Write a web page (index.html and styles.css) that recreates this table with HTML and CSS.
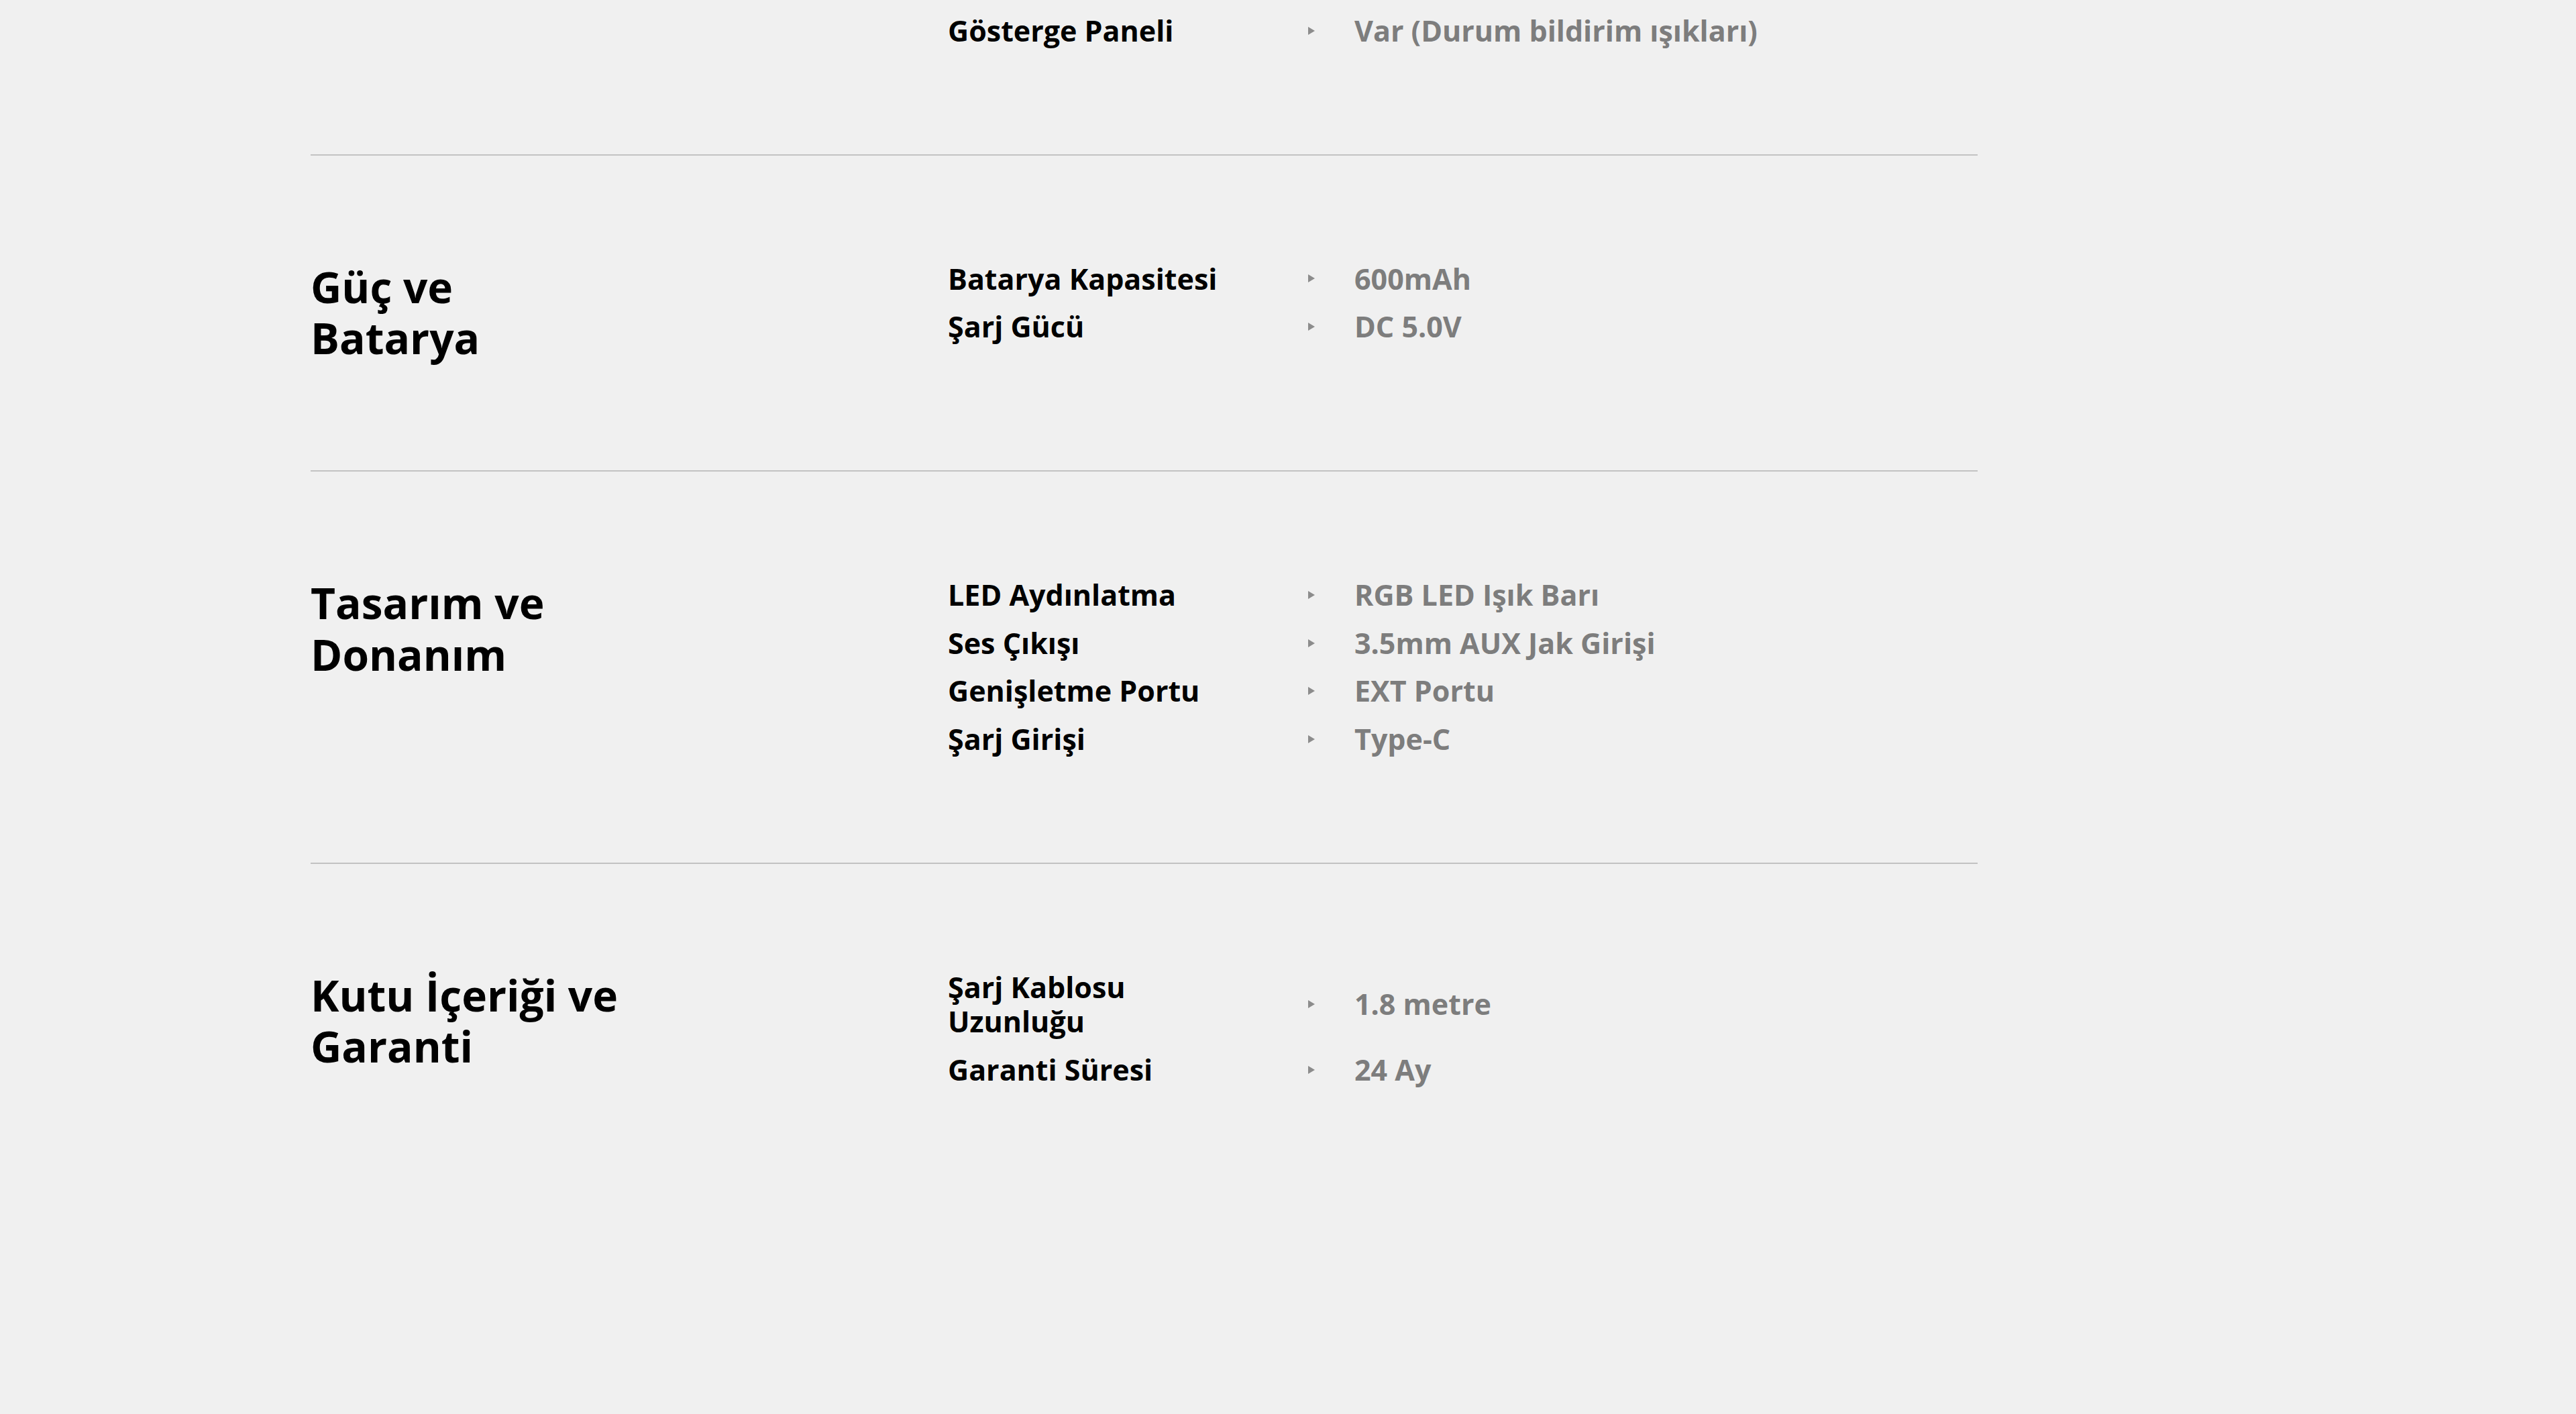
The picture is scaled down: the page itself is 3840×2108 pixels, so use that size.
FILE: index.html
```html
<!DOCTYPE html>
<html lang="tr">
<head>
<meta charset="utf-8">
<title>Teknik Özellikler</title>
<link rel="stylesheet" href="styles.css">
</head>
<body>
<main class="specs">
  <section class="spec-group spec-group--first">
    <h2 class="spec-title"></h2>
    <div class="spec-list">
      <div class="spec-row"><span class="spec-label">Gösterge Paneli</span><span class="spec-arrow"></span><span class="spec-value">Var (Durum bildirim ışıkları)</span></div>
    </div>
  </section>
  <section class="spec-group">
    <h2 class="spec-title">Güç ve<br>Batarya</h2>
    <div class="spec-list">
      <div class="spec-row"><span class="spec-label">Batarya Kapasitesi</span><span class="spec-arrow"></span><span class="spec-value">600mAh</span></div>
      <div class="spec-row"><span class="spec-label">Şarj Gücü</span><span class="spec-arrow"></span><span class="spec-value">DC 5.0V</span></div>
    </div>
  </section>
  <section class="spec-group">
    <h2 class="spec-title">Tasarım ve<br>Donanım</h2>
    <div class="spec-list">
      <div class="spec-row"><span class="spec-label">LED Aydınlatma</span><span class="spec-arrow"></span><span class="spec-value">RGB LED Işık Barı</span></div>
      <div class="spec-row"><span class="spec-label">Ses Çıkışı</span><span class="spec-arrow"></span><span class="spec-value">3.5mm AUX Jak Girişi</span></div>
      <div class="spec-row"><span class="spec-label">Genişletme Portu</span><span class="spec-arrow"></span><span class="spec-value">EXT Portu</span></div>
      <div class="spec-row"><span class="spec-label">Şarj Girişi</span><span class="spec-arrow"></span><span class="spec-value">Type-C</span></div>
    </div>
  </section>
  <section class="spec-group spec-group--last">
    <h2 class="spec-title">Kutu İçeriği ve<br>Garanti</h2>
    <div class="spec-list">
      <div class="spec-row"><span class="spec-label">Şarj Kablosu<br>Uzunluğu</span><span class="spec-arrow"></span><span class="spec-value">1.8 metre</span></div>
      <div class="spec-row"><span class="spec-label">Garanti Süresi</span><span class="spec-arrow"></span><span class="spec-value">24 Ay</span></div>
    </div>
  </section>
</main>
</body>
</html>
```
FILE: styles.css
```css
html, body {
  margin: 0;
  padding: 0;
  background: #f0f0f0;
}

body {
  font-family: "Open Sans", "Liberation Sans", sans-serif;
  font-weight: 700;
  color: #000;
  min-height: 2108px;
}

.specs {
  margin-left: 463px;
  width: 2485px;
}

.spec-group {
  display: flex;
  align-items: flex-start;
  padding: 158px 0;
  border-top: 2px solid #c2c2c2;
}

.spec-group--first {
  border-top: none;
  padding-top: 20px;
}

.spec-group--last {
  padding-bottom: 0;
}

.spec-title {
  flex: 0 0 950px;
  margin: 0;
  font-size: 64px;
  line-height: 1.2;
  font-weight: 700;
  letter-spacing: 0;
}

.spec-list {
  display: flex;
  flex-direction: column;
  gap: 20px;
}

.spec-row {
  display: flex;
  align-items: center;
  font-size: 43px;
  line-height: 1.2;
}

.spec-label {
  flex: 0 0 440px;
  color: #000;
}

.spec-arrow {
  flex: 0 0 auto;
  width: 0;
  height: 0;
  margin: 0 59px 0 97px;
  border-left: 10px solid #8c8c8c;
  border-top: 6px solid transparent;
  border-bottom: 6px solid transparent;
}

.spec-value {
  color: #7d7d7d;
}
```
